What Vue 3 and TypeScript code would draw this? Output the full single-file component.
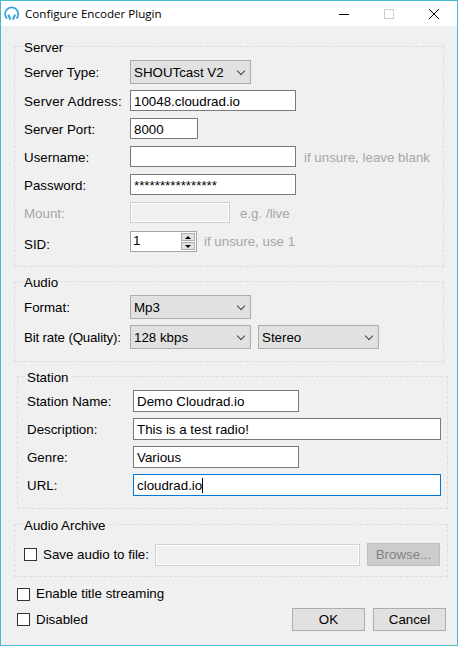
<script setup lang="ts">
import { ref } from 'vue'
const checks = ref({ save: false, title: false, disabled: false })
</script>

<template>
  <div class="window">
    <header class="titlebar">
      <svg class="logo" width="18" height="18" viewBox="0 0 18 18" fill="none">
        <path d="M4 13.6A6.6 6.6 0 1 1 13.4 13.6" stroke="#35a7de" stroke-width="1.8" />
        <path d="M5.4 9.6 7.4 14.6M12 9.6 10 14.6" stroke="#35a7de" stroke-width="2.2" />
      </svg>
      <span class="title">Configure Encoder Plugin</span>
      <div class="controls">
        <svg width="12" height="12" viewBox="0 0 12 12"><path d="M1 6.5H11" stroke="#000" /></svg>
        <svg width="12" height="12" viewBox="0 0 12 12"><rect x="1.5" y="1.5" width="9" height="9" fill="none" stroke="#ccc" /></svg>
        <svg width="12" height="12" viewBox="0 0 12 12"><path d="M1 1 11 11M11 1 1 11" stroke="#000" /></svg>
      </div>
    </header>

    <main class="body">
      <section class="group server">
        <span class="legend">Server</span>
        <div class="row r-type">
          <label class="lab">Server Type:</label>
          <div class="select w121">SHOUTcast V2<i class="chev"></i></div>
        </div>
        <div class="row r-addr">
          <label class="lab wide">Server Address:</label>
          <div class="input w166">10048.cloudrad.io</div>
        </div>
        <div class="row r-next">
          <label class="lab">Server Port:</label>
          <div class="input w68">8000</div>
        </div>
        <div class="row r-next">
          <label class="lab">Username:</label>
          <div class="input w166"></div>
          <span class="hint h-user">if unsure, leave blank</span>
        </div>
        <div class="row r-next">
          <label class="lab">Password:</label>
          <div class="input w166">****************</div>
        </div>
        <div class="row r-next">
          <label class="lab off">Mount:</label>
          <div class="input w100 disabled"></div>
          <span class="hint h-mount">e.g. /live</span>
        </div>
        <div class="row r-sid">
          <label class="lab sid">SID:</label>
          <div class="spin">
            <span class="spin-val">1</span>
            <div class="spin-btns">
              <span class="sb"><i class="up"></i></span>
              <span class="sb"><i class="down"></i></span>
            </div>
          </div>
          <span class="hint h-sid">if unsure, use 1</span>
        </div>
      </section>

      <section class="group audio">
        <span class="legend">Audio</span>
        <div class="row r-format">
          <label class="lab">Format:</label>
          <div class="select w121">Mp3<i class="chev"></i></div>
        </div>
        <div class="row r-rate">
          <label class="lab narrow">Bit rate (Quality):</label>
          <div class="select w121">128 kbps<i class="chev"></i></div>
          <div class="select w121 second">Stereo<i class="chev"></i></div>
        </div>
      </section>

      <section class="group station">
        <span class="legend">Station</span>
        <div class="row st-first">
          <label class="lab">Station Name:</label>
          <div class="input w166 tall">Demo Cloudrad.io</div>
        </div>
        <div class="row st-next">
          <label class="lab">Description:</label>
          <div class="input w308 tall">This is a test radio!</div>
        </div>
        <div class="row st-next">
          <label class="lab">Genre:</label>
          <div class="input w166 tall">Various</div>
        </div>
        <div class="row st-next">
          <label class="lab">URL:</label>
          <div class="input w308 tall focus">cloudrad.io<span class="caret"></span></div>
        </div>
      </section>

      <section class="group archive">
        <span class="legend">Audio Archive</span>
        <div class="row ar-row">
          <label class="check">
            <input v-model="checks.save" type="checkbox" class="native" />
            <span class="box"></span>
            <span>Save audio to file:</span>
          </label>
          <div class="input w205 disabled tall"></div>
          <button class="btn browse" disabled>Browse...</button>
        </div>
      </section>

      <div class="footer">
        <label class="check">
          <input v-model="checks.title" type="checkbox" class="native" />
          <span class="box"></span>
          <span>Enable title streaming</span>
        </label>
        <div class="foot-row">
          <label class="check">
            <input v-model="checks.disabled" type="checkbox" class="native" />
            <span class="box"></span>
            <span>Disabled</span>
          </label>
          <div class="buttons">
            <button class="btn">OK</button>
            <button class="btn">Cancel</button>
          </div>
        </div>
      </div>
    </main>
  </div>
</template>

<style>
html, body { margin: 0; background: #f0f0f0; }
</style>

<style scoped>
* { box-sizing: border-box; }
.window {
  width: 458px; height: 646px;
  border: 1px solid #4ab8cc;
  background: #f0f0f0;
  font: 13.33px/16px "Liberation Sans", Arial, sans-serif;
  color: #000;
  display: flex; flex-direction: column;
  overflow: hidden;
}
.titlebar {
  height: 25px; background: #fff;
  display: flex; align-items: center;
  padding-left: 2px;
  flex: none;
}
.logo { flex: none; }
.title { margin-left: 4px; font: 11.6px/16px "Open Sans", "Liberation Sans", sans-serif; }
.controls { margin-left: auto; margin-right: 17px; display: flex; align-items: center; gap: 33px; }
.body { flex: 1; position: relative; }

.group {
  position: relative;
  border: 1px dashed #dcdcdc;
}
.legend {
  position: absolute; top: -7px; left: 7px;
  background: #f0f0f0; padding: 0 2px;
  line-height: 15px;
}
.server { margin: 20px 0 0 13px; width: 430px; height: 221px; }
.audio { margin: 14px 0 0 13px; width: 430px; height: 81px; }
.station { margin: 14px 0 0 16px; width: 431px; height: 133px; }
.archive { margin: 15px 0 0 13px; width: 434px; height: 53px; }

.row { display: flex; align-items: center; }
.lab { width: 115px; padding: 2px 0 0 9px; flex: none; }
.wide { letter-spacing: 0.2px; }
.narrow { letter-spacing: -0.17px; }
.off { color: #a6a6a6; }
.sid { position: relative; top: 2px; }
.r-type { margin-top: 13px; height: 24px; }
.r-addr { margin-top: 6px; height: 21px; }
.r-next { margin-top: 7px; height: 21px; }
.r-sid { margin-top: 8px; height: 21px; }
.r-format { margin-top: 13px; height: 24px; }
.r-rate { margin-top: 6px; height: 24px; }

.st-first { margin-top: 13px; height: 22px; }
.st-next { margin-top: 6px; height: 22px; }

.select {
  position: relative;
  height: 24px; background: #e1e1e1;
  border: 1px solid #adadad;
  padding: 1px 0 0 3px; line-height: 22px;
  flex: none;
}
.second { margin-left: 7px; }
.chev {
  position: absolute; right: 6px; top: 7px;
  width: 6px; height: 6px;
  border-right: 1px solid #444; border-bottom: 1px solid #444;
  transform: rotate(45deg);
}
.input {
  height: 21px; background: #fff;
  border: 1px solid #7a7a7a;
  padding-left: 3px; line-height: 21px;
  white-space: nowrap; flex: none;
}
.tall { height: 22px; line-height: 22px; }
.w68 { width: 68px; }
.w100 { width: 100px; }
.w121 { width: 121px; }
.w166 { width: 166px; }
.w205 { width: 205px; }
.w308 { width: 308px; }
.disabled {
  background: #f0f0f0;
  border: 1px solid #cfcfcf;
  box-shadow: inset 0 0 0 1px #fff;
}
.focus { border-color: #0078d7; }
.caret {
  display: inline-block; width: 1px; height: 15px;
  background: #000; vertical-align: -3px;
}
.hint { color: #a6a6a6; flex: none; position: relative; top: 1px; }
.h-user { margin-left: 8px; }
.h-mount { margin-left: 10px; }
.h-sid { margin-left: 7px; top: 0; }

.spin {
  width: 67px; height: 21px; background: #fff;
  border: 1px solid #a5a5a5;
  display: flex; justify-content: space-between;
  flex: none;
}
.spin-val { padding-left: 2px; line-height: 18px; color: #000; }
.spin-btns { width: 15px; display: flex; flex-direction: column; gap: 1px; padding: 1px 1px 1px 0; }
.sb {
  flex: 1; background: #e1e1e1; border: 1px solid #adadad;
  display: flex; align-items: center; justify-content: center;
}
.up { border: 3px solid transparent; border-top: 0; border-bottom: 3px solid #000; }
.down { border: 3px solid transparent; border-bottom: 0; border-top: 3px solid #000; }

.check { display: flex; align-items: center; gap: 6px; flex: none; }
.native { position: absolute; opacity: 0; width: 0; height: 0; margin: 0; }
.box { width: 13px; height: 13px; background: #fff; border: 1px solid #333; flex: none; }
.ar-row { margin-top: 18px; padding-left: 9px; }
.ar-row .check { width: 131px; }
.btn {
  width: 73px; height: 23px;
  background: #e1e1e1; border: 1px solid #adadad;
  font: inherit; color: #000; padding: 0;
}
.browse { margin-left: 7px; background: #ccc; border-color: #bfbfbf; color: #838383; }
.footer { padding: 0 11px 0 16px; margin-top: 9px; }
.foot-row { display: flex; justify-content: space-between; align-items: center; margin-top: 6px; }
.buttons { display: flex; gap: 8px; }
</style>
